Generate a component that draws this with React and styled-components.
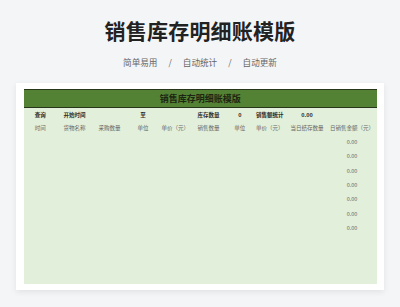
import React from "react";
import styled, { createGlobalStyle } from "styled-components";

const Global = createGlobalStyle`
  html, body { margin: 0; padding: 0; }
  body {
    background: #f4f5f7;
    font-family: "Noto Sans CJK SC", "Noto Sans", sans-serif;
    width: 400px;
    height: 307px;
    overflow: hidden;
  }
`;

const Page = styled.div`
  display: flex;
  flex-direction: column;
  align-items: center;
  padding-top: 16px;
`;

const Title = styled.h1`
  margin: 0;
  font-size: 21px;
  line-height: 28px;
  font-weight: 700;
  color: #222;
  letter-spacing: 0.2px;
`;

const Tags = styled.div`
  margin-top: 11px;
  display: flex;
  gap: 11px;
  font-size: 8.6px;
  line-height: 14px;
  color: #666;
`;

const Card = styled.div`
  margin-top: 14px;
  width: 368px;
  box-sizing: border-box;
  background: #fff;
  padding: 6px 7px 6px 7.5px;
  box-shadow: 0 2px 6px rgba(0, 0, 0, 0.08);
`;

const Sheet = styled.div`
  background: #e2efda;
  height: 195px;
  display: flex;
  flex-direction: column;
`;

const Banner = styled.div`
  height: 17px;
  border-top: 1px solid #27361a;
  border-bottom: 1px solid #27361a;
  background: #548235;
  display: flex;
  align-items: center;
  justify-content: center;
  font-size: 9px;
  font-weight: 700;
  color: #1d2612;
`;

const Row = styled.div`
  display: grid;
  grid-template-columns: 33.5px 35px 35px 32px 32.5px 34px 28.5px 31.5px 43px 47px;
  height: ${(p) => p.$h}px;
  align-items: center;
  font-size: 5.5px;
  font-weight: ${(p) => (p.$bold ? 700 : 400)};
  color: ${(p) => (p.$bold ? "#2b2b2b" : "#666")};
  white-space: nowrap;
`;

const Cell = styled.span`
  grid-column: ${(p) => p.$col};
  justify-self: center;
`;

const filter = [
  ["查询", 1],
  ["开始时间", 2],
  ["至", 4],
  ["库存数量", 6],
  ["0", 7],
  ["销售额统计", 8],
  ["0.00", 9],
];

const heads = [
  "时间",
  "货物名称",
  "采购数量",
  "单位",
  "单价（元）",
  "销售数量",
  "单位",
  "单价（元）",
  "当日结存数量",
  "日销售金额（元）",
];

export default function App() {
  return (
    <>
      <Global />
      <Page>
        <Title>销售库存明细账模版</Title>
        <Tags>
          <span>简单易用</span>
          <span>/</span>
          <span>自动统计</span>
          <span>/</span>
          <span>自动更新</span>
        </Tags>
        <Card>
          <Sheet>
            <Banner>销售库存明细账模版</Banner>
            <Row $h={13} $bold>
              {filter.map(([t, c]) => (
                <Cell key={t} $col={c}>{t}</Cell>
              ))}
            </Row>
            <Row $h={14}>
              {heads.map((t, i) => (
                <Cell key={i} $col={i + 1}>{t}</Cell>
              ))}
            </Row>
            {Array.from({ length: 7 }).map((_, i) => (
              <Row key={i} $h={14.3}>
                <Cell $col={10}>0.00</Cell>
              </Row>
            ))}
          </Sheet>
        </Card>
      </Page>
    </>
  );
}
